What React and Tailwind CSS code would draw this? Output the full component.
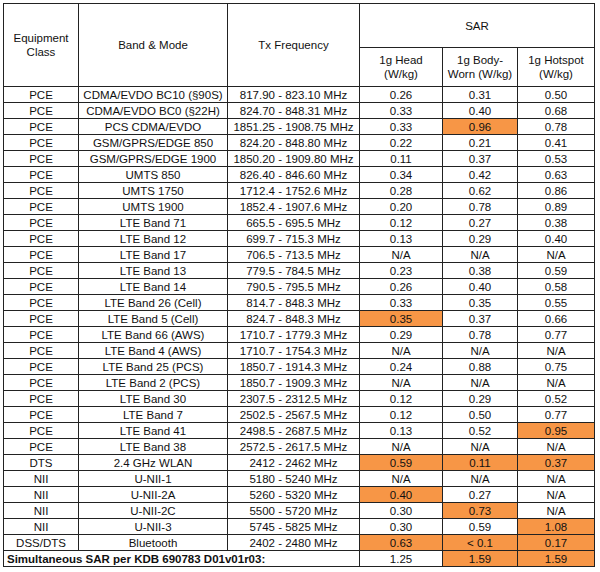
import React from "react";

const rows = [
  ["PCE", "CDMA/EVDO BC10 (§90S)", "817.90 - 823.10 MHz", "0.26", "0.31", "0.50", 0],
  ["PCE", "CDMA/EVDO BC0 (§22H)", "824.70 - 848.31 MHz", "0.33", "0.40", "0.68", 0],
  ["PCE", "PCS CDMA/EVDO", "1851.25 - 1908.75 MHz", "0.33", "0.96", "0.78", 2],
  ["PCE", "GSM/GPRS/EDGE 850", "824.20 - 848.80 MHz", "0.22", "0.21", "0.41", 0],
  ["PCE", "GSM/GPRS/EDGE 1900", "1850.20 - 1909.80 MHz", "0.11", "0.37", "0.53", 0],
  ["PCE", "UMTS 850", "826.40 - 846.60 MHz", "0.34", "0.42", "0.63", 0],
  ["PCE", "UMTS 1750", "1712.4 - 1752.6 MHz", "0.28", "0.62", "0.86", 0],
  ["PCE", "UMTS 1900", "1852.4 - 1907.6 MHz", "0.20", "0.78", "0.89", 0],
  ["PCE", "LTE Band 71", "665.5 - 695.5 MHz", "0.12", "0.27", "0.38", 0],
  ["PCE", "LTE Band 12", "699.7 - 715.3 MHz", "0.13", "0.29", "0.40", 0],
  ["PCE", "LTE Band 17", "706.5 - 713.5 MHz", "N/A", "N/A", "N/A", 0],
  ["PCE", "LTE Band 13", "779.5 - 784.5 MHz", "0.23", "0.38", "0.59", 0],
  ["PCE", "LTE Band 14", "790.5 - 795.5 MHz", "0.26", "0.40", "0.58", 0],
  ["PCE", "LTE Band 26 (Cell)", "814.7 - 848.3 MHz", "0.33", "0.35", "0.55", 0],
  ["PCE", "LTE Band 5 (Cell)", "824.7 - 848.3 MHz", "0.35", "0.37", "0.66", 1],
  ["PCE", "LTE Band 66 (AWS)", "1710.7 - 1779.3 MHz", "0.29", "0.78", "0.77", 0],
  ["PCE", "LTE Band 4 (AWS)", "1710.7 - 1754.3 MHz", "N/A", "N/A", "N/A", 0],
  ["PCE", "LTE Band 25 (PCS)", "1850.7 - 1914.3 MHz", "0.24", "0.88", "0.75", 0],
  ["PCE", "LTE Band 2 (PCS)", "1850.7 - 1909.3 MHz", "N/A", "N/A", "N/A", 0],
  ["PCE", "LTE Band 30", "2307.5 - 2312.5 MHz", "0.12", "0.29", "0.52", 0],
  ["PCE", "LTE Band 7", "2502.5 - 2567.5 MHz", "0.12", "0.50", "0.77", 0],
  ["PCE", "LTE Band 41", "2498.5 - 2687.5 MHz", "0.13", "0.52", "0.95", 4],
  ["PCE", "LTE Band 38", "2572.5 - 2617.5 MHz", "N/A", "N/A", "N/A", 0],
  ["DTS", "2.4 GHz WLAN", "2412 - 2462 MHz", "0.59", "0.11", "0.37", 7],
  ["NII", "U-NII-1", "5180 - 5240 MHz", "N/A", "N/A", "N/A", 0],
  ["NII", "U-NII-2A", "5260 - 5320 MHz", "0.40", "0.27", "N/A", 1],
  ["NII", "U-NII-2C", "5500 - 5720 MHz", "0.30", "0.73", "N/A", 2],
  ["NII", "U-NII-3", "5745 - 5825 MHz", "0.30", "0.59", "1.08", 4],
  ["DSS/DTS", "Bluetooth", "2402 - 2480 MHz", "0.63", "< 0.1", "0.17", 7],
];

const cell = "border border-[#222] p-0 text-center align-middle";

export default function App() {
  return (
    <div
      className="bg-white w-[600px] h-[572px] pl-[3px] pt-[3px] text-[#111] text-[11.5px] leading-[14px]"
      style={{ fontFamily: '"Liberation Sans", Arial, sans-serif' }}
    >
      <table className="table-fixed border-collapse w-[591px]">
        <colgroup>
          <col className="w-[75px]" />
          <col className="w-[149px]" />
          <col className="w-[132px]" />
          <col className="w-[83px]" />
          <col className="w-[75px]" />
          <col className="w-[77px]" />
        </colgroup>
        <thead>
          <tr className="h-[44px]">
            <td rowSpan={2} className={cell}>
              Equipment
              <br />
              Class
            </td>
            <td rowSpan={2} className={cell}>Band &amp; Mode</td>
            <td rowSpan={2} className={cell}>Tx Frequency</td>
            <td colSpan={3} className={cell}>SAR</td>
          </tr>
          <tr className="h-[39px]">
            <td className={cell}>
              1g Head
              <br />
              (W/kg)
            </td>
            <td className={cell}>
              1g Body-
              <br />
              Worn (W/kg)
            </td>
            <td className={cell}>
              1g Hotspot
              <br />
              (W/kg)
            </td>
          </tr>
        </thead>
        <tbody>
          {rows.map((r, i) => (
            <tr key={i} className="h-[16px]">
              <td className={cell}>{r[0]}</td>
              <td className={cell}>{r[1]}</td>
              <td className={cell}>{r[2]}</td>
              <td className={cell + (r[6] & 1 ? " bg-[#f79646]" : "")}>{r[3]}</td>
              <td className={cell + (r[6] & 2 ? " bg-[#f79646]" : "")}>{r[4]}</td>
              <td className={cell + (r[6] & 4 ? " bg-[#f79646]" : "")}>{r[5]}</td>
            </tr>
          ))}
          <tr className="h-[16px]">
            <td colSpan={3} className="border border-[#222] p-0 pl-[3px] text-left align-middle font-bold">
              Simultaneous SAR per KDB 690783 D01v01r03:
            </td>
            <td className={cell}>1.25</td>
            <td className={cell + " bg-[#f79646]"}>1.59</td>
            <td className={cell + " bg-[#f79646]"}>1.59</td>
          </tr>
        </tbody>
      </table>
    </div>
  );
}
